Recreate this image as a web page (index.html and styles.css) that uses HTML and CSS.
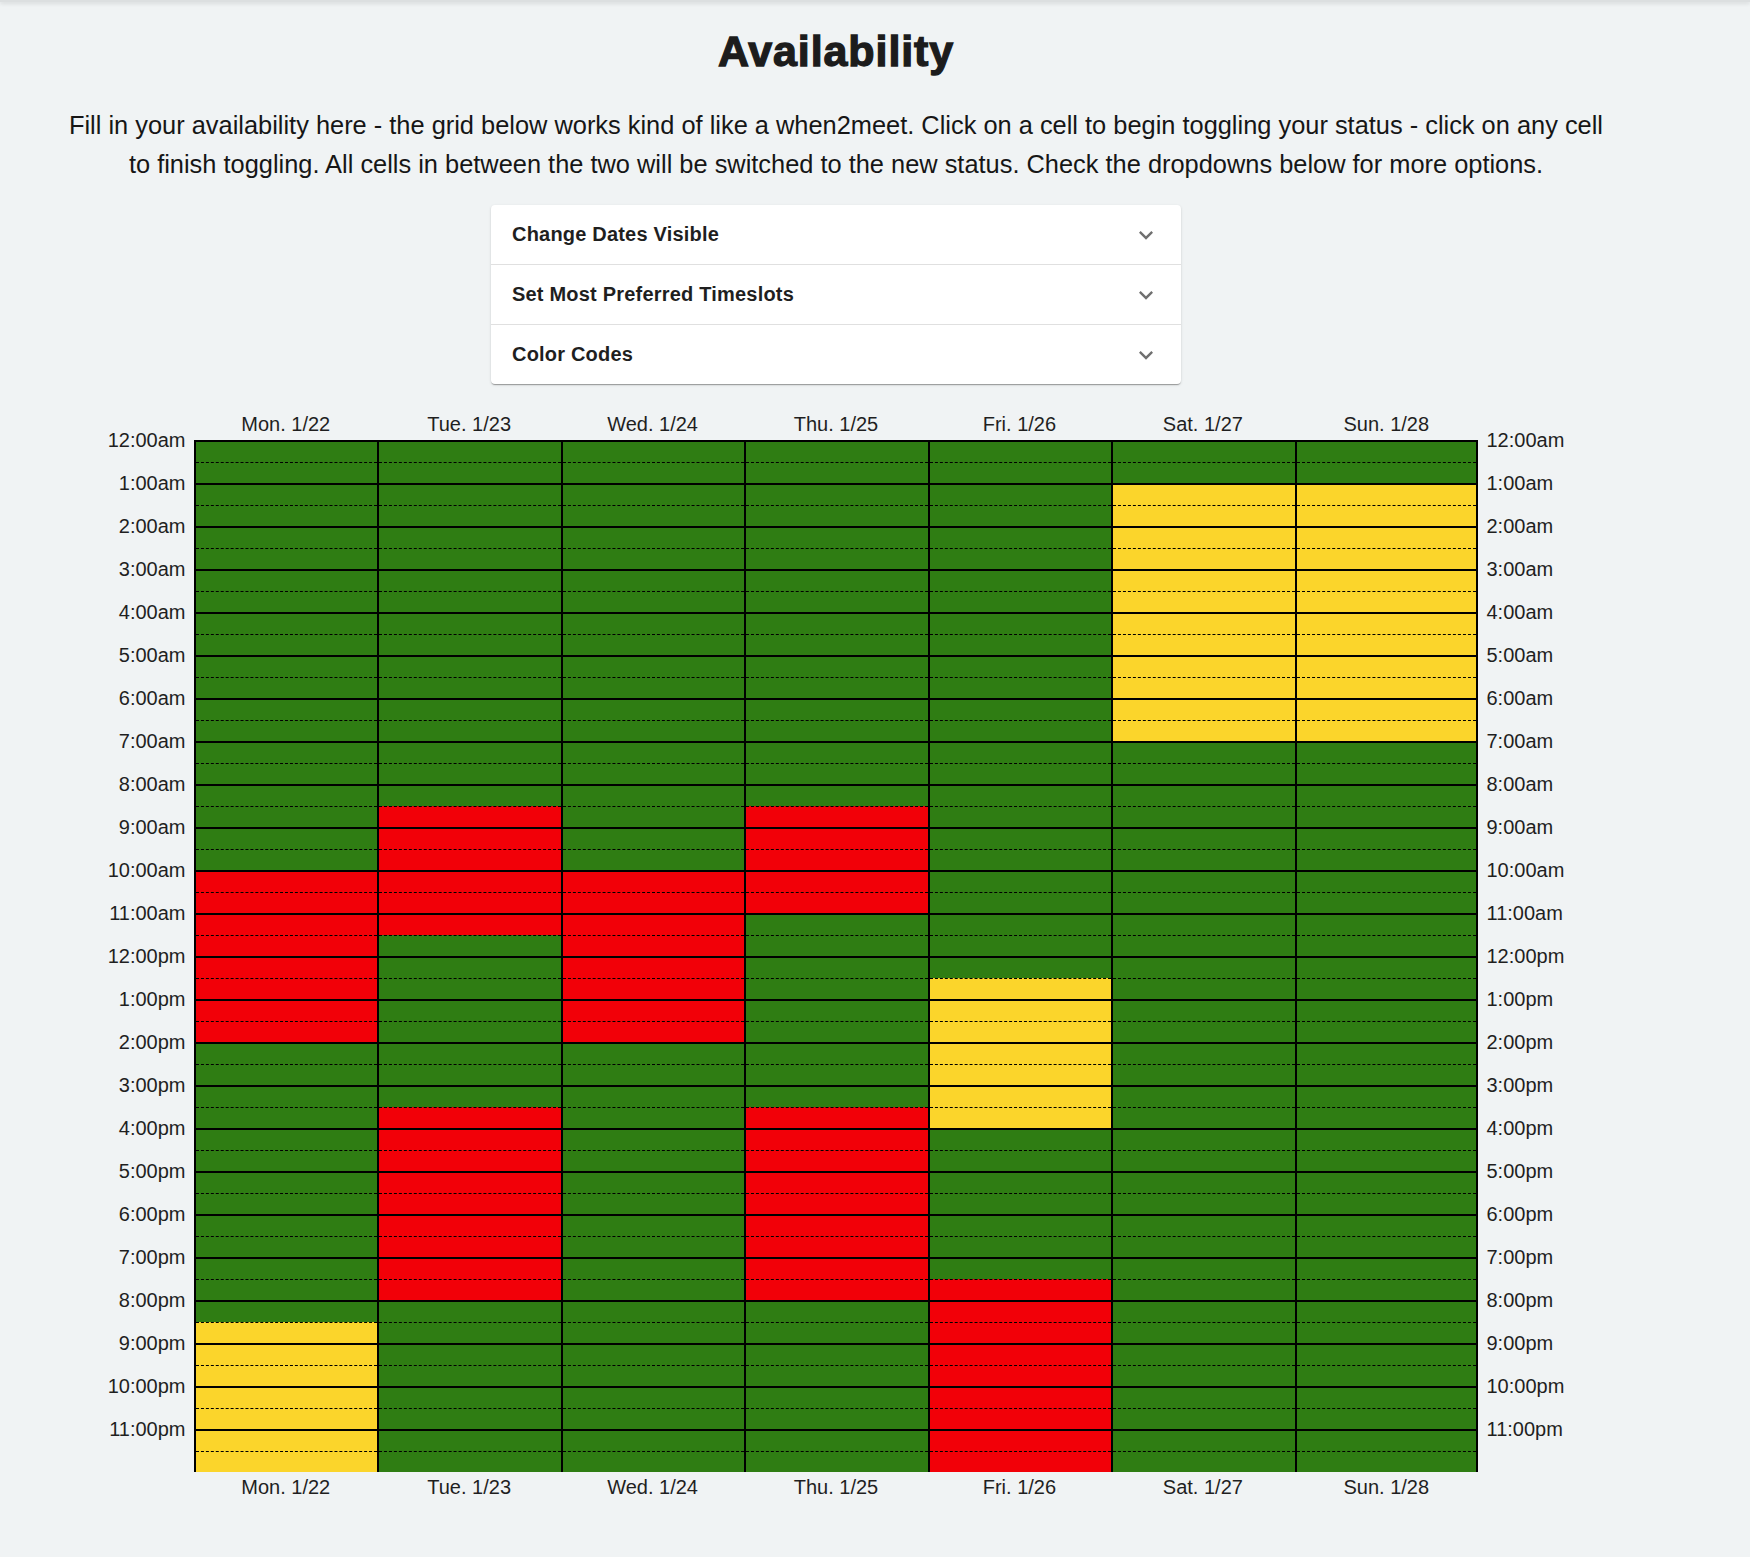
FILE: index.html
```html
<!DOCTYPE html>
<html lang="en">
<head>
<meta charset="utf-8">
<title>Availability</title>
<link rel="stylesheet" href="styles.css">
</head>
<body>
<div class="edge"></div>
<main class="page">
  <h1 class="title">Availability</h1>
  <p class="intro">Fill in your availability here - the grid below works kind of like a when2meet. Click on a cell to begin toggling your status - click on any cell to finish toggling. All cells in between the two will be switched to the new status. Check the dropdowns below for more options.</p>

  <section class="accordion">
    <div class="acc-row"><span>Change Dates Visible</span><svg class="chev" viewBox="0 0 24 24"><path d="M16.59 8.59 12 13.17 7.41 8.59 6 10l6 6 6-6z"/></svg></div>
    <div class="acc-row"><span>Set Most Preferred Timeslots</span><svg class="chev" viewBox="0 0 24 24"><path d="M16.59 8.59 12 13.17 7.41 8.59 6 10l6 6 6-6z"/></svg></div>
    <div class="acc-row"><span>Color Codes</span><svg class="chev" viewBox="0 0 24 24"><path d="M16.59 8.59 12 13.17 7.41 8.59 6 10l6 6 6-6z"/></svg></div>
  </section>

  <section class="schedule">
    <div></div>
    <div class="dh">Mon. 1/22</div>
    <div class="dh">Tue. 1/23</div>
    <div class="dh">Wed. 1/24</div>
    <div class="dh">Thu. 1/25</div>
    <div class="dh">Fri. 1/26</div>
    <div class="dh">Sat. 1/27</div>
    <div class="dh">Sun. 1/28</div>
    <div></div>

    <div class="times left">
      <div class="t">12:00am</div><div class="t">1:00am</div><div class="t">2:00am</div><div class="t">3:00am</div>
      <div class="t">4:00am</div><div class="t">5:00am</div><div class="t">6:00am</div><div class="t">7:00am</div>
      <div class="t">8:00am</div><div class="t">9:00am</div><div class="t">10:00am</div><div class="t">11:00am</div>
      <div class="t">12:00pm</div><div class="t">1:00pm</div><div class="t">2:00pm</div><div class="t">3:00pm</div>
      <div class="t">4:00pm</div><div class="t">5:00pm</div><div class="t">6:00pm</div><div class="t">7:00pm</div>
      <div class="t">8:00pm</div><div class="t">9:00pm</div><div class="t">10:00pm</div><div class="t">11:00pm</div>
    </div>

    <!-- Mon -->
    <div class="day">
      <div class="s g"></div><div class="s g"></div>
      <div class="s g"></div><div class="s g"></div>
      <div class="s g"></div><div class="s g"></div>
      <div class="s g"></div><div class="s g"></div>
      <div class="s g"></div><div class="s g"></div>
      <div class="s g"></div><div class="s g"></div>
      <div class="s g"></div><div class="s g"></div>
      <div class="s g"></div><div class="s g"></div>
      <div class="s g"></div><div class="s g"></div>
      <div class="s g"></div><div class="s g"></div>
      <div class="s r"></div><div class="s r"></div>
      <div class="s r"></div><div class="s r"></div>
      <div class="s r"></div><div class="s r"></div>
      <div class="s r"></div><div class="s r"></div>
      <div class="s g"></div><div class="s g"></div>
      <div class="s g"></div><div class="s g"></div>
      <div class="s g"></div><div class="s g"></div>
      <div class="s g"></div><div class="s g"></div>
      <div class="s g"></div><div class="s g"></div>
      <div class="s g"></div><div class="s g"></div>
      <div class="s g"></div><div class="s y"></div>
      <div class="s y"></div><div class="s y"></div>
      <div class="s y"></div><div class="s y"></div>
      <div class="s y"></div><div class="s y"></div>
    </div>

    <!-- Tue -->
    <div class="day">
      <div class="s g"></div><div class="s g"></div>
      <div class="s g"></div><div class="s g"></div>
      <div class="s g"></div><div class="s g"></div>
      <div class="s g"></div><div class="s g"></div>
      <div class="s g"></div><div class="s g"></div>
      <div class="s g"></div><div class="s g"></div>
      <div class="s g"></div><div class="s g"></div>
      <div class="s g"></div><div class="s g"></div>
      <div class="s g"></div><div class="s r"></div>
      <div class="s r"></div><div class="s r"></div>
      <div class="s r"></div><div class="s r"></div>
      <div class="s r"></div><div class="s g"></div>
      <div class="s g"></div><div class="s g"></div>
      <div class="s g"></div><div class="s g"></div>
      <div class="s g"></div><div class="s g"></div>
      <div class="s g"></div><div class="s r"></div>
      <div class="s r"></div><div class="s r"></div>
      <div class="s r"></div><div class="s r"></div>
      <div class="s r"></div><div class="s r"></div>
      <div class="s r"></div><div class="s r"></div>
      <div class="s g"></div><div class="s g"></div>
      <div class="s g"></div><div class="s g"></div>
      <div class="s g"></div><div class="s g"></div>
      <div class="s g"></div><div class="s g"></div>
    </div>

    <!-- Wed -->
    <div class="day">
      <div class="s g"></div><div class="s g"></div>
      <div class="s g"></div><div class="s g"></div>
      <div class="s g"></div><div class="s g"></div>
      <div class="s g"></div><div class="s g"></div>
      <div class="s g"></div><div class="s g"></div>
      <div class="s g"></div><div class="s g"></div>
      <div class="s g"></div><div class="s g"></div>
      <div class="s g"></div><div class="s g"></div>
      <div class="s g"></div><div class="s g"></div>
      <div class="s g"></div><div class="s g"></div>
      <div class="s r"></div><div class="s r"></div>
      <div class="s r"></div><div class="s r"></div>
      <div class="s r"></div><div class="s r"></div>
      <div class="s r"></div><div class="s r"></div>
      <div class="s g"></div><div class="s g"></div>
      <div class="s g"></div><div class="s g"></div>
      <div class="s g"></div><div class="s g"></div>
      <div class="s g"></div><div class="s g"></div>
      <div class="s g"></div><div class="s g"></div>
      <div class="s g"></div><div class="s g"></div>
      <div class="s g"></div><div class="s g"></div>
      <div class="s g"></div><div class="s g"></div>
      <div class="s g"></div><div class="s g"></div>
      <div class="s g"></div><div class="s g"></div>
    </div>

    <!-- Thu -->
    <div class="day">
      <div class="s g"></div><div class="s g"></div>
      <div class="s g"></div><div class="s g"></div>
      <div class="s g"></div><div class="s g"></div>
      <div class="s g"></div><div class="s g"></div>
      <div class="s g"></div><div class="s g"></div>
      <div class="s g"></div><div class="s g"></div>
      <div class="s g"></div><div class="s g"></div>
      <div class="s g"></div><div class="s g"></div>
      <div class="s g"></div><div class="s r"></div>
      <div class="s r"></div><div class="s r"></div>
      <div class="s r"></div><div class="s r"></div>
      <div class="s g"></div><div class="s g"></div>
      <div class="s g"></div><div class="s g"></div>
      <div class="s g"></div><div class="s g"></div>
      <div class="s g"></div><div class="s g"></div>
      <div class="s g"></div><div class="s r"></div>
      <div class="s r"></div><div class="s r"></div>
      <div class="s r"></div><div class="s r"></div>
      <div class="s r"></div><div class="s r"></div>
      <div class="s r"></div><div class="s r"></div>
      <div class="s g"></div><div class="s g"></div>
      <div class="s g"></div><div class="s g"></div>
      <div class="s g"></div><div class="s g"></div>
      <div class="s g"></div><div class="s g"></div>
    </div>

    <!-- Fri -->
    <div class="day">
      <div class="s g"></div><div class="s g"></div>
      <div class="s g"></div><div class="s g"></div>
      <div class="s g"></div><div class="s g"></div>
      <div class="s g"></div><div class="s g"></div>
      <div class="s g"></div><div class="s g"></div>
      <div class="s g"></div><div class="s g"></div>
      <div class="s g"></div><div class="s g"></div>
      <div class="s g"></div><div class="s g"></div>
      <div class="s g"></div><div class="s g"></div>
      <div class="s g"></div><div class="s g"></div>
      <div class="s g"></div><div class="s g"></div>
      <div class="s g"></div><div class="s g"></div>
      <div class="s g"></div><div class="s y"></div>
      <div class="s y"></div><div class="s y"></div>
      <div class="s y"></div><div class="s y"></div>
      <div class="s y"></div><div class="s y"></div>
      <div class="s g"></div><div class="s g"></div>
      <div class="s g"></div><div class="s g"></div>
      <div class="s g"></div><div class="s g"></div>
      <div class="s g"></div><div class="s r"></div>
      <div class="s r"></div><div class="s r"></div>
      <div class="s r"></div><div class="s r"></div>
      <div class="s r"></div><div class="s r"></div>
      <div class="s r"></div><div class="s r"></div>
    </div>

    <!-- Sat -->
    <div class="day">
      <div class="s g"></div><div class="s g"></div>
      <div class="s y"></div><div class="s y"></div>
      <div class="s y"></div><div class="s y"></div>
      <div class="s y"></div><div class="s y"></div>
      <div class="s y"></div><div class="s y"></div>
      <div class="s y"></div><div class="s y"></div>
      <div class="s y"></div><div class="s y"></div>
      <div class="s g"></div><div class="s g"></div>
      <div class="s g"></div><div class="s g"></div>
      <div class="s g"></div><div class="s g"></div>
      <div class="s g"></div><div class="s g"></div>
      <div class="s g"></div><div class="s g"></div>
      <div class="s g"></div><div class="s g"></div>
      <div class="s g"></div><div class="s g"></div>
      <div class="s g"></div><div class="s g"></div>
      <div class="s g"></div><div class="s g"></div>
      <div class="s g"></div><div class="s g"></div>
      <div class="s g"></div><div class="s g"></div>
      <div class="s g"></div><div class="s g"></div>
      <div class="s g"></div><div class="s g"></div>
      <div class="s g"></div><div class="s g"></div>
      <div class="s g"></div><div class="s g"></div>
      <div class="s g"></div><div class="s g"></div>
      <div class="s g"></div><div class="s g"></div>
    </div>

    <!-- Sun -->
    <div class="day last">
      <div class="s g"></div><div class="s g"></div>
      <div class="s y"></div><div class="s y"></div>
      <div class="s y"></div><div class="s y"></div>
      <div class="s y"></div><div class="s y"></div>
      <div class="s y"></div><div class="s y"></div>
      <div class="s y"></div><div class="s y"></div>
      <div class="s y"></div><div class="s y"></div>
      <div class="s g"></div><div class="s g"></div>
      <div class="s g"></div><div class="s g"></div>
      <div class="s g"></div><div class="s g"></div>
      <div class="s g"></div><div class="s g"></div>
      <div class="s g"></div><div class="s g"></div>
      <div class="s g"></div><div class="s g"></div>
      <div class="s g"></div><div class="s g"></div>
      <div class="s g"></div><div class="s g"></div>
      <div class="s g"></div><div class="s g"></div>
      <div class="s g"></div><div class="s g"></div>
      <div class="s g"></div><div class="s g"></div>
      <div class="s g"></div><div class="s g"></div>
      <div class="s g"></div><div class="s g"></div>
      <div class="s g"></div><div class="s g"></div>
      <div class="s g"></div><div class="s g"></div>
      <div class="s g"></div><div class="s g"></div>
      <div class="s g"></div><div class="s g"></div>
    </div>

    <div class="times right">
      <div class="t">12:00am</div><div class="t">1:00am</div><div class="t">2:00am</div><div class="t">3:00am</div>
      <div class="t">4:00am</div><div class="t">5:00am</div><div class="t">6:00am</div><div class="t">7:00am</div>
      <div class="t">8:00am</div><div class="t">9:00am</div><div class="t">10:00am</div><div class="t">11:00am</div>
      <div class="t">12:00pm</div><div class="t">1:00pm</div><div class="t">2:00pm</div><div class="t">3:00pm</div>
      <div class="t">4:00pm</div><div class="t">5:00pm</div><div class="t">6:00pm</div><div class="t">7:00pm</div>
      <div class="t">8:00pm</div><div class="t">9:00pm</div><div class="t">10:00pm</div><div class="t">11:00pm</div>
    </div>

    <div></div>
    <div class="df">Mon. 1/22</div>
    <div class="df">Tue. 1/23</div>
    <div class="df">Wed. 1/24</div>
    <div class="df">Thu. 1/25</div>
    <div class="df">Fri. 1/26</div>
    <div class="df">Sat. 1/27</div>
    <div class="df">Sun. 1/28</div>
    <div></div>
  </section>
</main>
</body>
</html>
```
FILE: styles.css
```css
html, body {
  margin: 0;
  padding: 0;
}

body {
  background: #f0f3f4;
  font-family: "Liberation Sans", Arial, sans-serif;
  color: #1f1f1f;
}

.edge {
  height: 2px;
  background: #dcdfe0;
  box-shadow: 0 1px 4px rgba(0, 0, 0, 0.18);
}

.page {
  width: 1672px;
  display: flex;
  flex-direction: column;
  align-items: center;
}

.title {
  margin: 0;
  padding-top: 24px;
  font-size: 43px;
  line-height: 50px;
  font-weight: 700;
  letter-spacing: 0.9px;
  color: #1c1c1c;
  -webkit-text-stroke: 1.3px #1c1c1c;
}

.intro {
  width: 1550px;
  margin: 30px 0 0;
  font-size: 25.4px;
  line-height: 39px;
  text-align: center;
  color: #161616;
}

.accordion {
  width: 690px;
  margin-top: 21px;
  background: #fff;
  border-radius: 4px;
  box-shadow: 0 2px 1px -1px rgba(0, 0, 0, 0.2), 0 1px 1px 0 rgba(0, 0, 0, 0.14), 0 1px 3px 0 rgba(0, 0, 0, 0.12);
}

.acc-row {
  height: 59px;
  display: flex;
  align-items: center;
  justify-content: space-between;
  padding: 0 21px 0 21px;
  font-size: 20px;
  font-weight: 700;
  letter-spacing: 0.2px;
  color: #1f1f1f;
}

.acc-row + .acc-row {
  border-top: 1px solid rgba(0, 0, 0, 0.12);
}

.chev {
  width: 28px;
  height: 28px;
  fill: #707070;
}

.schedule {
  margin-top: 29px;
  width: 1672px;
  display: grid;
  grid-template-columns: 194px repeat(7, 1fr) 194px;
}

.dh {
  text-align: center;
  font-size: 20px;
  line-height: 23px;
  padding-bottom: 4px;
}

.df {
  text-align: center;
  font-size: 20px;
  line-height: 23px;
  padding-top: 4px;
}

.times {
  display: flex;
  flex-direction: column;
  margin-top: -21.5px;
}

.times.left {
  align-items: flex-end;
  padding-right: 8.5px;
}

.times.right {
  align-items: flex-start;
  padding-left: 8.5px;
}

.t {
  height: 43px;
  line-height: 43px;
  font-size: 20px;
  white-space: nowrap;
}

.day {
  display: flex;
  flex-direction: column;
  border-left: 2px solid #000;
}

.day.last {
  border-right: 2px solid #000;
}

.s {
  height: 21.5px;
  box-sizing: border-box;
  flex: none;
}

.s:nth-child(odd) {
  border-top: 2px solid #000;
}

.s:nth-child(even) {
  border-top: 1px dashed #000;
}

.g { background: #2f7d13; }
.r { background: #f20008; }
.y { background: #fbd52b; }
```
